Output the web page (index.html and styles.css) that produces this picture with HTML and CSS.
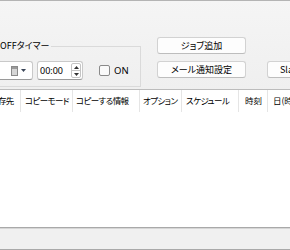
FILE: index.html
```html
<!DOCTYPE html>
<html lang="ja">
<head>
<meta charset="utf-8">
<link rel="stylesheet" href="styles.css">
</head>
<body>
<div class="app">
  <div class="toolbar">
    <fieldset class="timer">
      <legend>OFFタイマー</legend>
      <div class="controls">
        <div class="datebox">
          <svg class="cal" width="7" height="10" viewBox="0 0 7 10">
            <rect x="0.5" y="0.5" width="6" height="9" fill="#d6d6d6" stroke="#8a8a8a"/>
            <rect x="1" y="1" width="5" height="2" fill="#9a9a9a"/>
          </svg>
          <svg class="caret" width="5" height="3" viewBox="0 0 5 3"><path d="M0 0H5L2.5 3Z" fill="#3a4558"/></svg>
        </div>
        <div class="timebox">
          <span class="time">00:00</span>
          <div class="spin">
            <span class="sb"><svg width="5" height="3" viewBox="0 0 5 3"><path d="M0 3H5L2.5 0Z" fill="#333"/></svg></span>
            <span class="sb"><svg width="5" height="3" viewBox="0 0 5 3"><path d="M0 0H5L2.5 3Z" fill="#333"/></svg></span>
          </div>
        </div>
        <label class="check"><span class="box"></span><span class="on">ON</span></label>
      </div>
    </fieldset>
    <div class="btncol">
      <button class="btn">ジョブ追加</button>
      <button class="btn">メール通知設定</button>
    </div>
    <div class="btncol slackcol">
      <button class="btn slack">Slack通知設定</button>
    </div>
  </div>
  <div class="table">
    <div class="thead">
      <div class="th c1">保存先</div>
      <div class="th c2">コピーモード</div>
      <div class="th c3">コピーする情報</div>
      <div class="th c4">オプション</div>
      <div class="th c5">スケジュール</div>
      <div class="th c6">時刻</div>
      <div class="th c7">日(時間)</div>
    </div>
    <div class="tbody"></div>
  </div>
  <div class="status"></div>
</div>
</body>
</html>
```
FILE: styles.css
```css
* { box-sizing: border-box; }
html, body { margin: 0; padding: 0; }
body {
  width: 290px;
  height: 250px;
  overflow: hidden;
  background: #f0f0f0;
  font-family: "Noto Sans CJK JP", "Noto Sans", sans-serif;
  font-size: 9px;
  color: #000;
  font-feature-settings: "palt";
}
.app {
  display: flex;
  flex-direction: column;
  width: 290px;
  height: 250px;
  border-top: 1px solid #b4b4b4;
  background: linear-gradient(#f5f5f5, #efefef 88px);
}
.toolbar {
  height: 88px;
  display: flex;
  align-items: flex-start;
  flex-shrink: 0;
}
.timer {
  flex-shrink: 0;
  margin: 40px 0 0 0;
  padding: 0;
  border: 1px solid #dadada;
  border-left: none;
  width: 141px;
  height: 46px;
  min-width: 0;
}
.timer legend {
  padding: 0 2px 0 0;
  margin: 0;
  line-height: 10px;
  font-size: 9px;
}
.controls {
  display: flex;
  align-items: center;
  margin-top: 10px;
  height: 19px;
}
.datebox {
  flex-shrink: 0;
  margin-left: -20px;
  width: 53px;
  height: 19px;
  background: #fff;
  border: 1px solid #c9c9c9;
  border-bottom-color: #9a9a9a;
  border-radius: 3px;
  display: flex;
  align-items: center;
  justify-content: flex-end;
  padding-right: 6px;
  gap: 3px;
}
.cal { display: block; }
.caret { display: block; }
.timebox {
  flex-shrink: 0;
  margin-left: 4px;
  width: 46px;
  height: 19px;
  background: #fff;
  border: 1px solid #c9c9c9;
  border-bottom-color: #9a9a9a;
  border-radius: 3px;
  display: flex;
  align-items: center;
  padding-left: 2px;
  padding-right: 1px;
}
.time {
  flex: 1;
  font-family: "Noto Sans", sans-serif;
  font-size: 9px;
  line-height: 17px;
}
.spin {
  display: flex;
  flex-direction: column;
  width: 10px;
  height: 15px;
  border: 1px solid #c4c4c4;
  border-radius: 2px;
}
.sb {
  flex: 1;
  display: flex;
  align-items: center;
  justify-content: center;
}
.sb + .sb { border-top: 1px solid #c4c4c4; }
.sb svg { display: block; }
.check {
  flex-shrink: 0;
  margin-left: 16px;
  display: flex;
  align-items: center;
  gap: 4px;
}
.box {
  width: 11px;
  height: 11px;
  border: 1px solid #8a8a8a;
  border-radius: 2px;
  background: #fafafa;
}
.on {
  font-family: "Noto Sans", sans-serif;
  font-size: 9.5px;
  line-height: 11px;
}
.btncol {
  flex-shrink: 0;
  display: flex;
  flex-direction: column;
  gap: 7px;
  margin-left: 16px;
  margin-top: 36px;
}
.slackcol {
  margin-left: 21px;
  margin-top: 60px;
}
.btn {
  width: 89px;
  height: 17px;
  padding: 0;
  margin: 0;
  font: inherit;
  font-size: 9px;
  line-height: 15px;
  color: #000;
  background: #fdfdfd;
  border: 1px solid #d2d2d2;
  border-bottom-color: #bdbdbd;
  border-radius: 3px;
  text-align: center;
  white-space: nowrap;
}
.slack {
  text-align: left;
  padding-left: 12px;
}
.table {
  flex: 1;
  display: flex;
  flex-direction: column;
  border-top: 1px solid #bcbcbc;
  background: #fff;
}
.thead {
  display: flex;
  height: 22px;
  margin-left: -15px;
  flex-shrink: 0;
}
.th {
  flex-shrink: 0;
  padding-left: 5px;
  line-height: 21px;
  font-size: 8.5px;
  letter-spacing: -0.6px;
  white-space: nowrap;
  overflow: hidden;
  border-right: 1px solid #e5e5e5;
}
.c1 { width: 36px; }
.c2 { width: 52px; padding-left: 4px; }
.c3 { width: 67px; padding-left: 3px; }
.c4 { width: 42px; padding-left: 3px; }
.c5 { width: 57px; padding-left: 4px; }
.c6 { width: 29px; padding-left: 6px; letter-spacing: 0; }
.c7 { width: 70px; border-right: none; letter-spacing: 0; }
.tbody { flex: 1; background: #fff; }
.status {
  height: 23px;
  flex-shrink: 0;
  background: #f0f0f0;
  border-top: 1px solid #a9a9a9;
  border-bottom: 1px solid #a9a9a9;
  box-shadow: inset 0 1px 0 #d6d6d6;
}
```
